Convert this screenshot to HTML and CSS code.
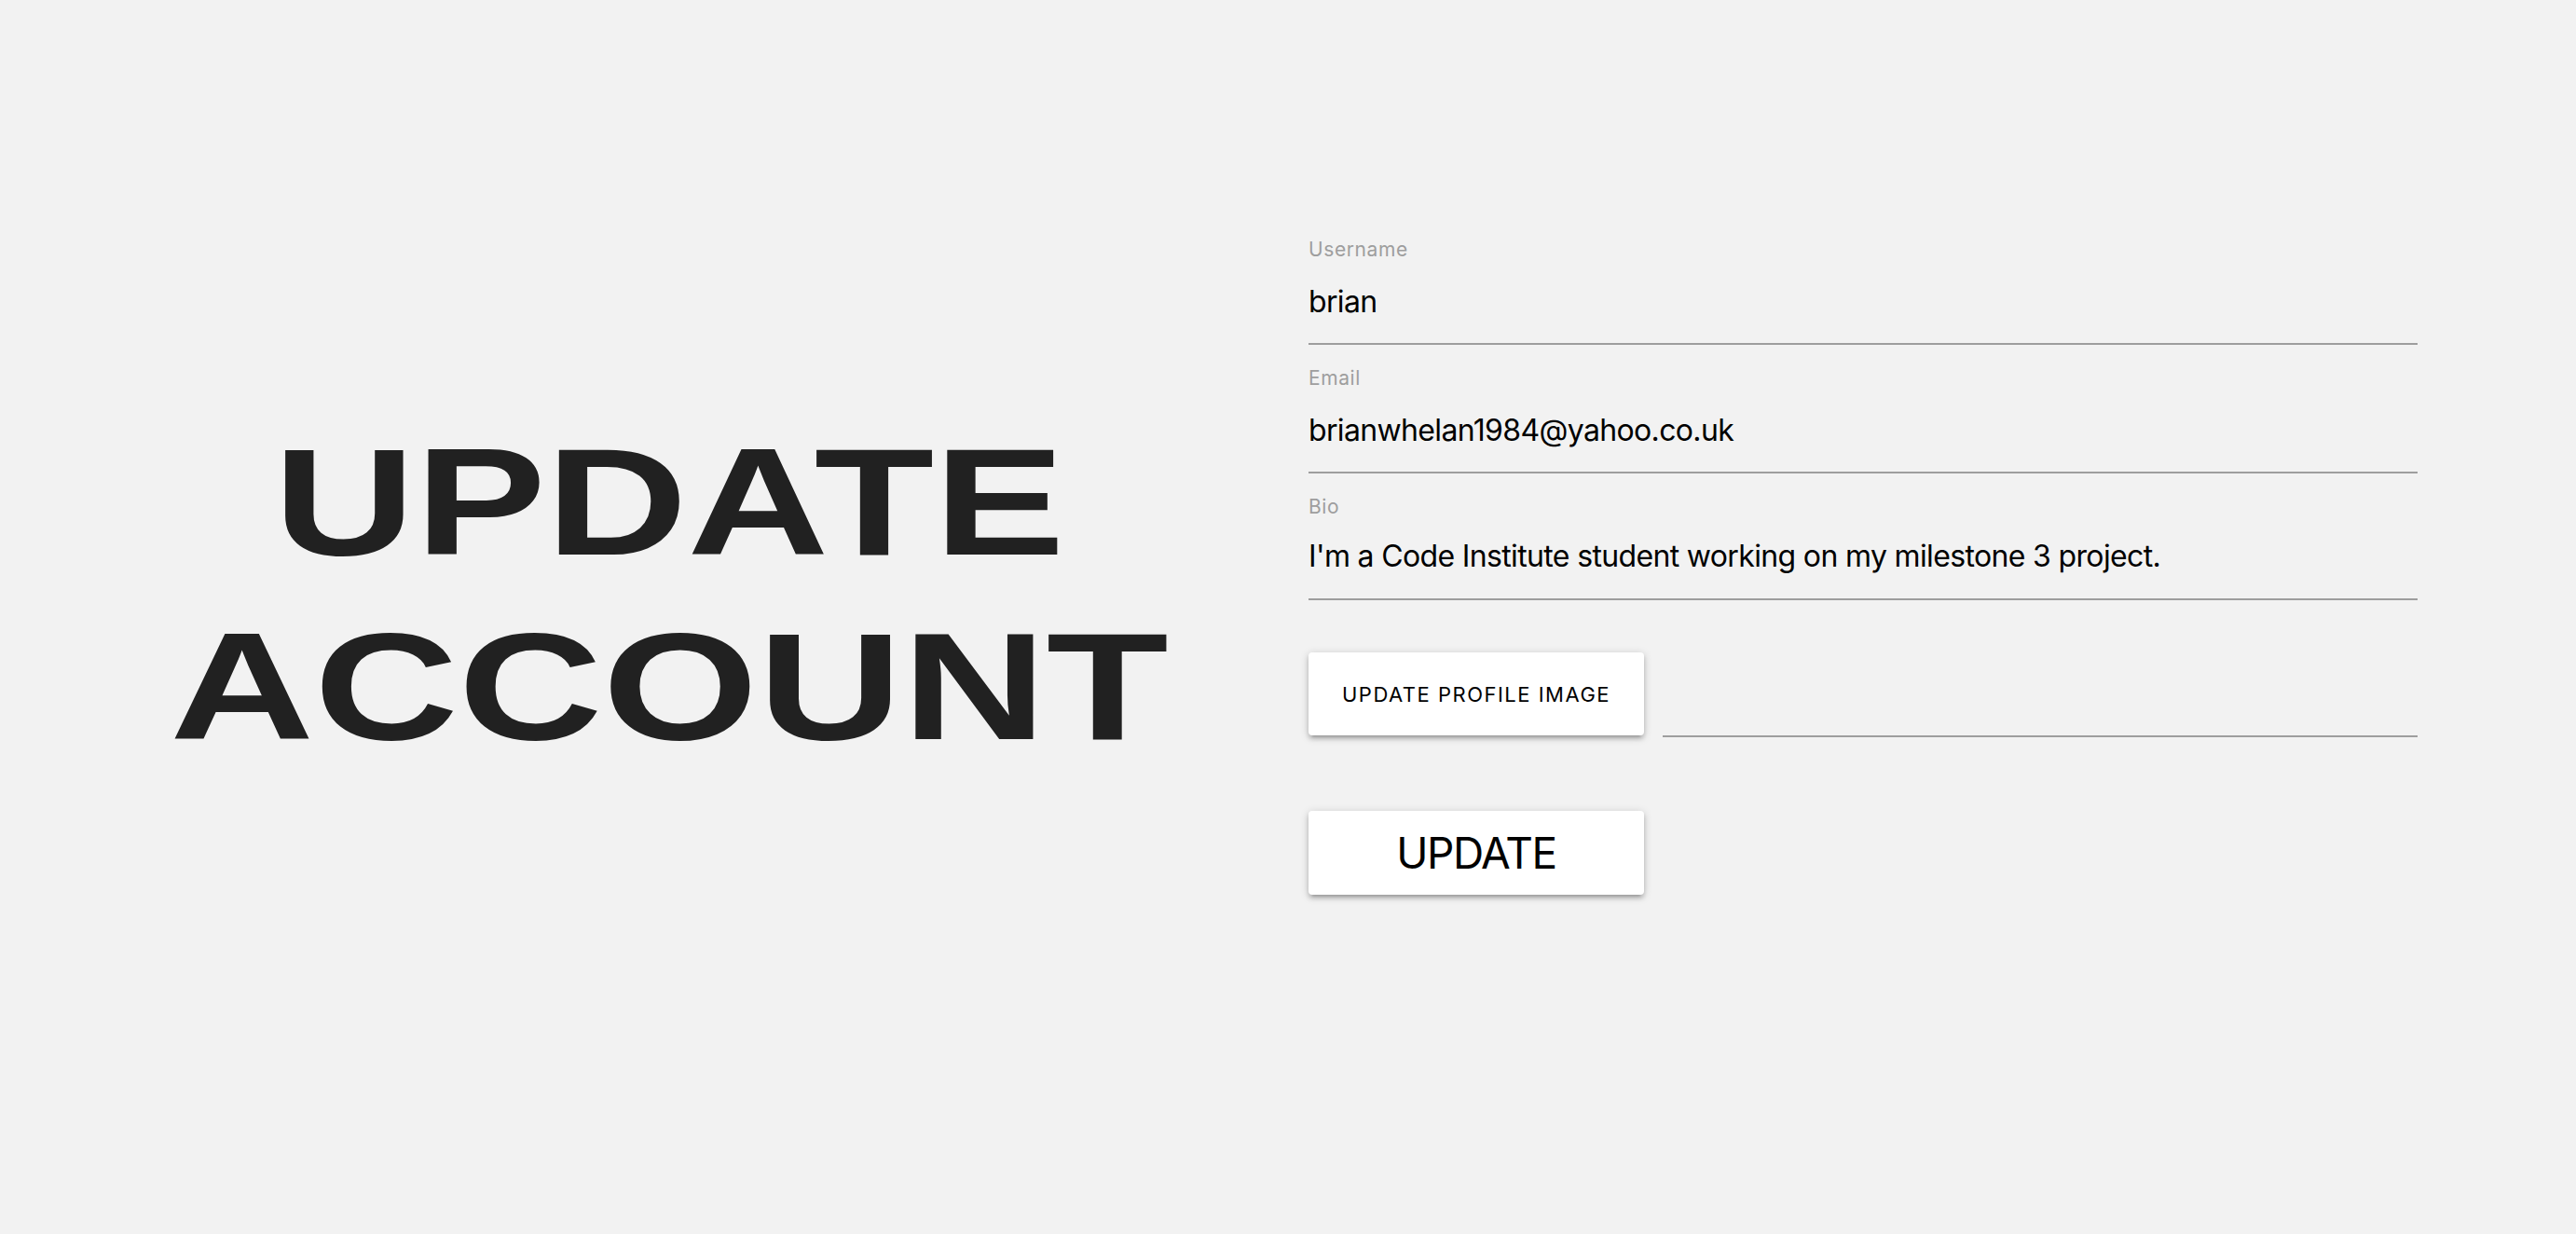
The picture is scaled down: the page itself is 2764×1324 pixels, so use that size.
FILE: index.html
```html
<!DOCTYPE html>
<html lang="en">
<head>
<meta charset="utf-8">
<title>Update Account</title>
<link rel="stylesheet" href="styles.css">
</head>
<body>
<main class="page">
  <section class="intro">
    <h1 class="title"><span class="title-line">UPDATE</span><span class="title-line title-line--wide">ACCOUNT</span></h1>
  </section>
  <section class="form-col">
    <form class="account-form" onsubmit="return false">
      <div class="field">
        <label class="field-label" for="username">Username</label>
        <input class="field-value" id="username" type="text" value="brian">
      </div>
      <div class="field">
        <label class="field-label" for="email">Email</label>
        <input class="field-value" id="email" type="email" value="brianwhelan1984@yahoo.co.uk">
      </div>
      <div class="field">
        <label class="field-label" for="bio">Bio</label>
        <input class="field-value field-value--bio" id="bio" type="text" value="I'm a Code Institute student working on my milestone 3 project.">
      </div>
      <div class="file-field">
        <button type="button" class="btn btn--small">UPDATE PROFILE IMAGE</button>
        <div class="file-path"></div>
      </div>
      <button type="submit" class="btn btn--large">UPDATE</button>
    </form>
  </section>
</main>
</body>
</html>
```

FILE: styles.css
```css
html, body {
  margin: 0;
  padding: 0;
}

body {
  background: #f2f2f2;
  width: 2764px;
  height: 1324px;
  overflow: hidden;
  font-family: "Inter", "Liberation Sans", sans-serif;
}

.page {
  display: flex;
  align-items: flex-start;
}

.intro {
  width: 1324px;
  margin-left: 56px;
  padding-top: 440px;
}

.title {
  margin: 0;
  font-family: "Liberation Sans", Arial, sans-serif;
  font-weight: 700;
  font-size: 163px;
  line-height: 198px;
  color: #212121;
  text-align: center;
}

.title-line {
  display: block;
  transform: scaleX(1.29);
  transform-origin: center;
}

.title-line--wide {
  transform: scaleX(1.315);
}

.form-col {
  width: 1190px;
  margin-left: 24px;
  padding-top: 255px;
}

.account-form {
  display: flex;
  flex-direction: column;
  align-items: flex-start;
}

.field {
  width: 100%;
  margin-bottom: 23px;
}

.field-label {
  display: block;
  font-family: "Inter", sans-serif;
  font-size: 21px;
  line-height: 26px;
  letter-spacing: 0.6px;
  color: #9e9e9e;
}

.field-value {
  display: block;
  box-sizing: content-box;
  width: 100%;
  height: 40px;
  margin: 0;
  padding: 23px 0 24px;
  border: 0;
  border-bottom: 2px solid #9e9e9e;
  border-radius: 0;
  background: transparent;
  outline: none;
  font-family: "Inter", sans-serif;
  font-size: 32px;
  line-height: 40px;
  letter-spacing: -0.65px;
  color: #000;
}

.field-value--bio {
  padding: 20px 0 25px;
}

.file-field {
  display: flex;
  align-items: flex-start;
  width: 100%;
  margin-top: 33px;
}

.file-path {
  flex: 1;
  height: 89px;
  margin-left: 20px;
  border-bottom: 2px solid #9e9e9e;
}

.btn {
  display: flex;
  align-items: center;
  justify-content: center;
  width: 360px;
  height: 89px;
  padding: 0;
  border: 0;
  border-radius: 4px;
  background: #fff;
  color: #000;
  cursor: pointer;
  box-shadow: 0 4px 4px 0 rgba(0, 0, 0, 0.14),
              0 6px 2px -4px rgba(0, 0, 0, 0.12),
              0 2px 10px 0 rgba(0, 0, 0, 0.2);
}

.btn--small {
  font-family: "Inter", sans-serif;
  font-size: 22px;
  letter-spacing: 1.5px;
}

.btn--large {
  margin-top: 79px;
  height: 90px;
  font-family: "Inter", sans-serif;
  font-size: 46px;
  letter-spacing: -1.5px;
}
```
